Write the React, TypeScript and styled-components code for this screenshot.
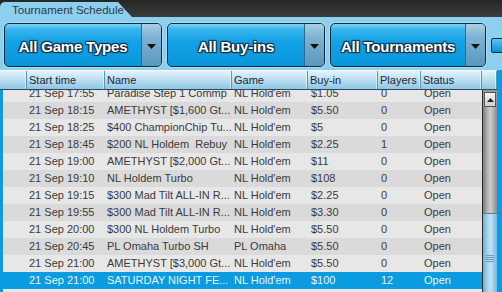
import styled, { createGlobalStyle } from "styled-components";

const GlobalStyle = createGlobalStyle`
  html, body {
    margin: 0;
    padding: 0;
    background: #0a9be0;
  }
  body {
    font-family: "Liberation Sans", Arial, sans-serif;
  }
`;

type Row = {
    time: string
    name: string
    game: string
    buyin: string
    players: string
    status: string
}

const rows: Row[] = [
    { time: "21 Sep 17:55", name: "Paradise Step 1 Commp", game: "NL Hold'em", buyin: "$1.05", players: "0", status: "Open" },
    { time: "21 Sep 18:15", name: "AMETHYST [$1,600 Gt...", game: "NL Hold'em", buyin: "$5.50", players: "0", status: "Open" },
    { time: "21 Sep 18:25", name: "$400 ChampionChip Tu...", game: "NL Hold'em", buyin: "$5", players: "0", status: "Open" },
    { time: "21 Sep 18:45", name: "$200 NL Holdem  Rebuy", game: "NL Hold'em", buyin: "$2.25", players: "1", status: "Open" },
    { time: "21 Sep 19:00", name: "AMETHYST [$2,000 Gt...", game: "NL Hold'em", buyin: "$11", players: "0", status: "Open" },
    { time: "21 Sep 19:10", name: "NL Holdem Turbo", game: "NL Hold'em", buyin: "$108", players: "0", status: "Open" },
    { time: "21 Sep 19:15", name: "$300 Mad Tilt ALL-IN R...", game: "NL Hold'em", buyin: "$2.25", players: "0", status: "Open" },
    { time: "21 Sep 19:55", name: "$300 Mad Tilt ALL-IN R...", game: "NL Hold'em", buyin: "$3.30", players: "0", status: "Open" },
    { time: "21 Sep 20:00", name: "$300 NL Holdem Turbo", game: "NL Hold'em", buyin: "$5.50", players: "0", status: "Open" },
    { time: "21 Sep 20:45", name: "PL Omaha Turbo SH", game: "PL Omaha", buyin: "$5.50", players: "0", status: "Open" },
    { time: "21 Sep 21:00", name: "AMETHYST [$3,000 Gt...", game: "NL Hold'em", buyin: "$5.50", players: "0", status: "Open" },
    { time: "21 Sep 21:00", name: "SATURDAY NIGHT FE...", game: "NL Hold'em", buyin: "$100", players: "12", status: "Open" },
]

const COLS = "24px 78px 127px 76px 70px 43px 61px"

function Dropdown({ label, width }: { label: string, width: number }) {
    return (
        <Drop style={{ width }}>
            <DropLabel>{label}</DropLabel>
            <DropArrow>
                <svg width="9" height="5" viewBox="0 0 9 5">
                    <path d="M0 0 L9 0 L4.5 5 Z" fill="#111" />
                </svg>
            </DropArrow>
        </Drop>
    )
}

export default function App() {
    return (
        <Page>
            <GlobalStyle />
            <TopBar>
                <Tab>Tournament Schedule</Tab>
            </TopBar>
            <Panel>
                <Filters>
                    <Dropdown label="All Game Types" width={158} />
                    <Dropdown label="All Buy-ins" width={158} />
                    <Dropdown label="All Tournaments" width={156} />
                    <MiniButton />
                </Filters>
                <TableWrap>
                    <Header>
                        <HeadCell />
                        <HeadCell>Start time</HeadCell>
                        <HeadCell>Name</HeadCell>
                        <HeadCell>Game</HeadCell>
                        <HeadCell>Buy-in</HeadCell>
                        <HeadCell>Players</HeadCell>
                        <HeadCell>Status</HeadCell>
                        <HeadCell />
                    </Header>
                    <BodyArea>
                        <List>
                            <Rows>
                                {rows.map((r, i) => (
                                    <RowLine key={i} $dark={i % 2 === 1} $selected={i === rows.length - 1}>
                                        <Cell />
                                        <Cell>{r.time}</Cell>
                                        <Cell>{r.name}</Cell>
                                        <Cell>{r.game}</Cell>
                                        <Cell $pad={3}>{r.buyin}</Cell>
                                        <Cell $pad={3}>{r.players}</Cell>
                                        <Cell $pad={3}>{r.status}</Cell>
                                    </RowLine>
                                ))}
                            </Rows>
                        </List>
                        <ScrollBar>
                            <ScrollUp>
                                <svg width="7" height="4" viewBox="0 0 7 4">
                                    <path d="M0 4 L7 4 L3.5 0 Z" fill="#222" />
                                </svg>
                            </ScrollUp>
                            <Track />
                            <Thumb>
                                <Grip />
                            </Thumb>
                        </ScrollBar>
                    </BodyArea>
                </TableWrap>
            </Panel>
        </Page>
    )
}

const Page = styled.div`
    width: 502px;
    height: 292px;
    overflow: hidden;
    display: flex;
    flex-direction: column;
    background: #0a9be0;
`

const TopBar = styled.div`
    height: 17px;
    background: linear-gradient(#262626, #3c3c3c);
    display: flex;
    align-items: flex-end;
`

const Tab = styled.div`
    width: 132px;
    height: 15px;
    box-sizing: border-box;
    padding: 2px 0 0 12px;
    background: #8ccfef;
    border-top-left-radius: 5px;
    clip-path: polygon(0 0, 118px 0, 132px 100%, 0 100%);
    color: #2c3a44;
    font-size: 11.5px;
    line-height: 13px;
    white-space: nowrap;
`

const Panel = styled.div`
    flex: 1;
    display: flex;
    flex-direction: column;
    background: #8ccfef;
    min-height: 0;
`

const Filters = styled.div`
    display: flex;
    align-items: flex-start;
    gap: 5px;
    padding: 6px 0 3px 4px;
`

const Drop = styled.div`
    height: 44px;
    box-sizing: border-box;
    flex: none;
    display: flex;
    border: 1px solid #10293a;
    border-radius: 5px;
    overflow: hidden;
    box-shadow: 0 0 0 1px rgba(255,255,255,0.25);
    background: linear-gradient(#7fd3f6 0%, #3ab5ee 12%, #14a2e6 40%, #0a96da 100%);
`

const DropLabel = styled.div`
    flex: 1;
    display: flex;
    align-items: center;
    justify-content: center;
    padding-top: 2px;
    color: #fff;
    font-size: 15px;
    font-weight: bold;
    letter-spacing: -0.2px;
    text-shadow: 0 0 1px #0b2c44, 1px 1px 1px #0b2c44, -1px -1px 1px #0b2c44, 1px -1px 1px #0b2c44, -1px 1px 1px #0b2c44;
    white-space: nowrap;
`

const DropArrow = styled.div`
    width: 19px;
    display: flex;
    align-items: center;
    justify-content: center;
    padding-top: 2px;
    border-left: 1px solid #2d6c91;
    background: linear-gradient(#a9d0e6 0%, #7fb3d2 30%, #5a97bd 100%);
`

const MiniButton = styled.div`
    width: 14px;
    height: 13px;
    margin-top: 15px;
    flex: none;
    border: 1px solid #10293a;
    border-radius: 2px;
    background: linear-gradient(#5cc6f2, #0a8fd4);
`

const TableWrap = styled.div`
    flex: 1;
    min-height: 0;
    display: flex;
    flex-direction: column;
    background: #0a9be0;
    padding: 0 5px 0 3px;
`

const Header = styled.div`
    height: 20px;
    flex: none;
    display: grid;
    grid-template-columns: ${COLS} 1fr;
    background: linear-gradient(#e4f3fb 0%, #c2e2f3 40%, #8ec6e4 100%);
    border-top: 1px solid #f2fafe;
    border-bottom: 1px solid #2b4a5e;
    box-sizing: border-box;
    margin-left: -3px;
    padding-left: 3px;
`

const HeadCell = styled.div`
    font-size: 11px;
    line-height: 18px;
    color: #1c2a33;
    padding-left: 2px;
    border-right: 1px solid #5d93b4;
    box-shadow: inset -1px 0 0 rgba(255,255,255,0.5);
    white-space: nowrap;
    overflow: hidden;
`

const BodyArea = styled.div`
    flex: 1;
    min-height: 0;
    display: flex;
    background: #e6e6e6;
`

const List = styled.div`
    width: 479px;
    overflow: hidden;
`

const Rows = styled.div`
    margin-top: -5px;
`

const RowLine = styled.div<{ $dark: boolean, $selected: boolean }>`
    display: grid;
    grid-template-columns: ${COLS};
    height: 17px;
    background: ${p => p.$selected ? "#0a9be0" : p.$dark ? "#dadada" : "#e7e7e7"};
    color: ${p => p.$selected ? "#e4f5ff" : "#3a3a3a"};
`

const Cell = styled.div<{ $pad?: number }>`
    font-size: 11px;
    line-height: 17px;
    padding-left: ${p => p.$pad ?? 2}px;
    white-space: pre;
    overflow: hidden;
`

const ScrollBar = styled.div`
    width: 14px;
    border-left: 1px solid #2a2a2a;
    display: flex;
    flex-direction: column;
    background: #999;
`

const ScrollUp = styled.div`
    height: 13px;
    margin: 2px 1px 0 1px;
    display: flex;
    align-items: center;
    justify-content: center;
    border: 1px solid #555;
    background: linear-gradient(#f4f4f4, #cfcfcf);
`

const Track = styled.div`
    height: 106px;
    flex: none;
    background: linear-gradient(90deg, #7c7c7c 0%, #b8b8b8 35%, #cdcdcd 55%, #8a8a8a 100%);
`

const Thumb = styled.div`
    flex: 1;
    display: flex;
    justify-content: center;
    padding-top: 41px;
    border-top: 1px solid #5d7d92;
    background: linear-gradient(90deg, #6faed4 0%, #a9d6ef 35%, #bfe3f6 55%, #7ab6da 100%);
`

const Grip = styled.div`
    width: 8px;
    height: 8px;
    background: repeating-linear-gradient(#6a9cbc 0px, #6a9cbc 1px, transparent 1px, transparent 2px);
`
